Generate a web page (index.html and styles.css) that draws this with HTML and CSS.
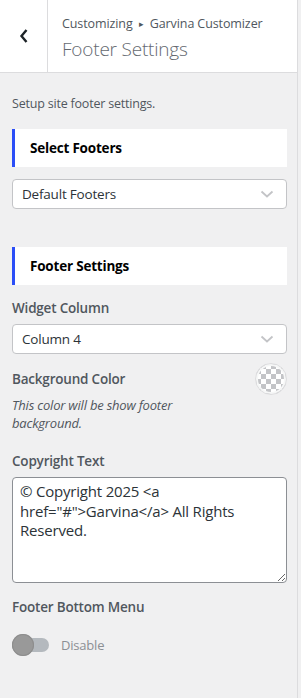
FILE: index.html
```html
<!DOCTYPE html>
<html>

<head>
  <meta charset="utf-8">
  <title>Footer Settings</title>
  <link rel="stylesheet" href="styles.css">
</head>

<body>
  <div class="panel">
    <div class="head">
      <div class="back">
        <svg width="10" height="16" viewBox="0 0 10 16">
          <path d="M7.5 2 L2.5 8 L7.5 14" fill="none" stroke="#1d2327" stroke-width="2.4" />
        </svg>
      </div>
      <div class="title">
        <div class="crumb">Customizing <span class="arrow">&#9656;</span> Garvina Customizer</div>
        <h2>Footer Settings</h2>
      </div>
    </div>

    <div class="content">
      <p class="desc">Setup site footer settings.</p>

      <div class="section-head">Select Footers</div>
      <div class="select">
        <span>Default Footers</span>
        <svg width="14" height="8" viewBox="0 0 14 8">
          <path d="M1.5 1.5 L7 6.5 L12.5 1.5" fill="none" stroke="#c3c4c7" stroke-width="1.8" />
        </svg>
      </div>

      <div class="section-head second">Footer Settings</div>

      <div class="control">
        <label class="label">Widget Column</label>
        <div class="select">
          <span>Column 4</span>
          <svg width="14" height="8" viewBox="0 0 14 8">
            <path d="M1.5 1.5 L7 6.5 L12.5 1.5" fill="none" stroke="#c3c4c7" stroke-width="1.8" />
          </svg>
        </div>
      </div>

      <div class="control color-row">
        <div class="color-text">
          <label class="label">Background Color</label>
          <p class="note">This color will be show footer background.</p>
        </div>
        <div class="swatch"></div>
      </div>

      <div class="control copy">
        <label class="label">Copyright Text</label>
        <textarea class="area">© Copyright 2025 &lt;a href="#"&gt;Garvina&lt;/a&gt; All Rights Reserved.</textarea>
      </div>

      <div class="control bottom-menu">
        <label class="label">Footer Bottom Menu</label>
        <div class="toggle-row">
          <div class="toggle"><span class="knob"></span></div>
          <span class="toggle-text">Disable</span>
        </div>
      </div>
    </div>
  </div>
</body>

</html>
```

FILE: styles.css
```css
body {
  margin: 0;
  font-family: "Open Sans", "Noto Sans", sans-serif;
  background-color: #f0f0f1;
  color: #50575e;
}

.panel {
  width: 297px;
  height: 698px;
  border-right: 1px solid #dcdcde;
  background-color: #f0f0f1;
}

/*///////////////////////////////////////////////////////////////////////////*/
.head {
  display: flex;
  height: 72px;
  background-color: #fff;
  border-bottom: 1px solid #dcdcde;
}

.back {
  width: 47px;
  border-right: 1px solid #dcdcde;
  display: flex;
  align-items: center;
  justify-content: center;
}

.title {
  padding: 14px 0 0 14px;
}

.crumb {
  font-size: 12.5px;
  line-height: 20px;
  color: #50575e;
  letter-spacing: -0.1px;
}

.arrow {
  font-size: 9px;
  padding: 0 3px;
  position: relative;
  top: -1px;
}

h2 {
  margin: 1px 0 0 0;
  font-size: 19px;
  font-weight: 300;
  line-height: 26px;
  color: #646970;
  letter-spacing: -0.2px;
}

/*///////////////////////////////////////////////////////////////////////////*/
.content {
  padding: 0 10px 0 12px;
}

.desc {
  margin: 0;
  padding-top: 21px;
  font-size: 12.5px;
  line-height: 20px;
  letter-spacing: -0.2px;
}

.section-head {
  margin-top: 15px;
  height: 38px;
  display: flex;
  align-items: center;
  padding-left: 15px;
  background-color: #fff;
  border-left: 3px solid #2b4ef7;
  font-size: 13.5px;
  font-weight: 700;
  color: #000;
  letter-spacing: -0.2px;
}

.section-head.second {
  margin-top: 38px;
}

.select {
  margin-top: 12px;
  height: 28px;
  border: 1px solid #c3c4c7;
  border-radius: 4px;
  background-color: #fff;
  display: flex;
  align-items: center;
  justify-content: space-between;
  padding: 0 12px 0 9px;
  font-size: 13.5px;
  color: #2c3338;
  letter-spacing: -0.2px;
}

.control {
  margin-top: 13px;
}

.label {
  display: block;
  font-size: 13.5px;
  font-weight: 600;
  line-height: 20px;
  color: #50575e;
  letter-spacing: -0.2px;
}

.control .select {
  margin-top: 6px;
}

.color-row {
  display: flex;
  justify-content: space-between;
  align-items: flex-start;
  margin-top: 9px;
}

.color-text {
  padding-top: 6px;
}

.note {
  margin: 7px 0 0 0;
  width: 190px;
  font-size: 13px;
  line-height: 18px;
  font-style: italic;
  color: #50575e;
  letter-spacing: -0.2px;
}

.swatch {
  width: 30px;
  height: 30px;
  border-radius: 50%;
  border: 1px solid #dcdcde;
  background-color: #fff;
  background-image:
    linear-gradient(45deg, #c3c4c7 25%, transparent 25%, transparent 75%, #c3c4c7 75%),
    linear-gradient(45deg, #c3c4c7 25%, transparent 25%, transparent 75%, #c3c4c7 75%);
  background-size: 10px 10px;
  background-position: 0 0, 5px 5px;
  box-shadow: inset 0 0 0 2px #f6f7f7;
}

.copy {
  margin-top: 19px;
}

.area {
  display: block;
  box-sizing: border-box;
  width: 100%;
  height: 106px;
  margin-top: 6px;
  padding: 4px 7px;
  border: 1px solid #8c8f94;
  border-radius: 4px;
  font-family: "Open Sans", "Noto Sans", sans-serif;
  font-size: 15px;
  line-height: 19.5px;
  color: #2c3338;
  letter-spacing: -0.2px;
}

.bottom-menu {
  margin-top: 14px;
}

.toggle-row {
  display: flex;
  align-items: center;
  margin-top: 19px;
}

.toggle {
  width: 37px;
  height: 14px;
  border-radius: 7px;
  background-color: #b4b9be;
  display: flex;
  align-items: center;
}

.knob {
  width: 22px;
  height: 22px;
  border-radius: 50%;
  background-color: #999;
  box-shadow: 0 0 0 1px #8e8e8e inset;
}

.toggle-text {
  margin-left: 12px;
  font-size: 13px;
  color: #8c8f94;
  letter-spacing: -0.2px;
}
```
